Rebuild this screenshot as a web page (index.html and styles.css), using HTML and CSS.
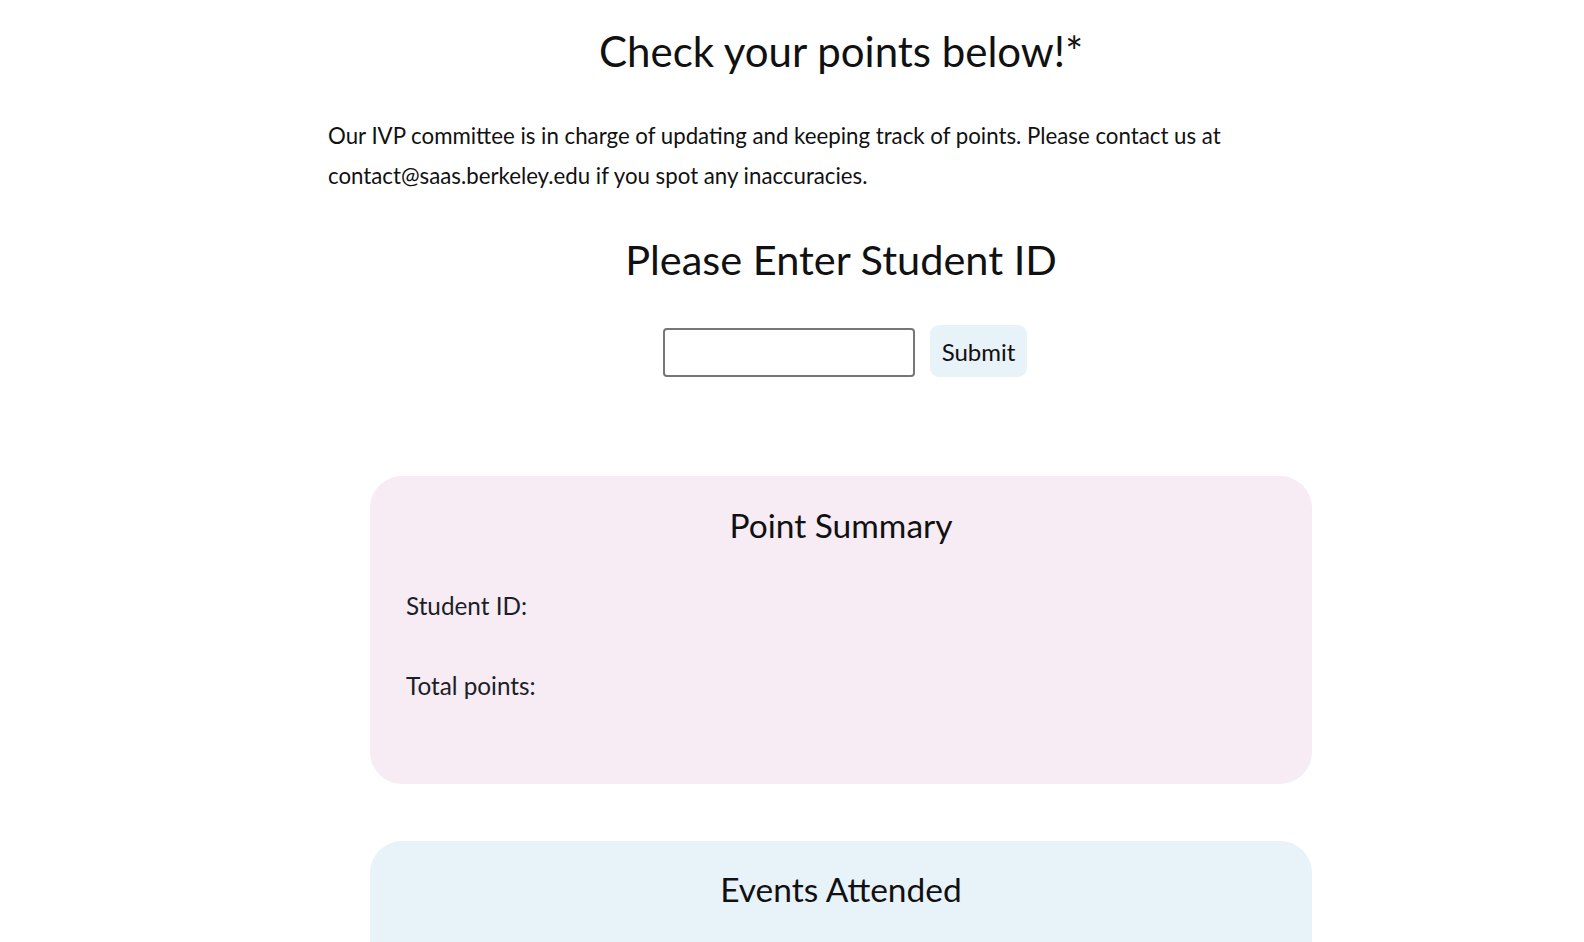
FILE: index.html
```html
<!DOCTYPE html>
<html lang="en">
<head>
<meta charset="utf-8">
<title>Check your points</title>
<link rel="stylesheet" href="styles.css">
</head>
<body>
<div class="page">
  <main class="content">
    <h1 class="title">Check your points below!*</h1>
    <p class="intro">Our IVP committee is in charge of updating and keeping track of points. Please contact us at contact@saas.berkeley.edu if you spot any inaccuracies.</p>
    <h2 class="prompt">Please Enter Student ID</h2>
    <form class="lookup">
      <input class="id-input" type="text" aria-label="Student ID">
      <button class="submit" type="button">Submit</button>
    </form>
    <section class="card card-pink">
      <h3 class="card-title">Point Summary</h3>
      <p class="field field-first">Student ID:</p>
      <p class="field field-second">Total points:</p>
    </section>
    <section class="card card-blue">
      <h3 class="card-title">Events Attended</h3>
    </section>
  </main>
</div>
</body>
</html>
```

FILE: styles.css
```css
html, body {
  margin: 0;
  padding: 0;
  background: #ffffff;
}
body {
  font-family: "Lato", "Open Sans", sans-serif;
  color: #111111;
}
.page {
  display: flex;
  justify-content: center;
  padding-left: 98px;
}
.content {
  width: 1026px;
  display: flex;
  flex-direction: column;
}
.title {
  margin: 26px 0 0;
  font-size: 42px;
  line-height: 50px;
  font-weight: 400;
  text-align: center;
}
.intro {
  margin: 40px 0 0;
  font-size: 22.25px;
  line-height: 40px;
}
.prompt {
  margin: 38px 0 0;
  font-size: 41.5px;
  line-height: 50px;
  font-weight: 400;
  text-align: center;
}
.lookup {
  margin: 41px 0 0;
  display: flex;
  justify-content: center;
  align-items: center;
  gap: 15px;
  padding-left: 8px;
}
.id-input {
  width: 252px;
  height: 49px;
  box-sizing: border-box;
  border: 2px solid #767676;
  border-radius: 4px;
  font-size: 22px;
  padding: 0 8px;
  margin-top: 3px;
}
.submit {
  width: 97px;
  height: 52px;
  border: none;
  border-radius: 9px;
  background: #e8f2f9;
  font-family: inherit;
  font-size: 24px;
  color: #111111;
  padding: 0;
}
.card {
  margin: 0 42px 0 42px;
  border-radius: 32px;
  padding: 29px 36px 83px;
}
.card-pink {
  margin-top: 99px;
  background: #f7ebf4;
}
.card-blue {
  margin-top: 57px;
  padding-top: 28px;
  background: #e8f2f9;
  min-height: 120px;
}
.card-title {
  margin: 0;
  font-size: 33.5px;
  line-height: 40px;
  font-weight: 400;
  text-align: center;
}
.field {
  margin: 0;
  font-size: 24.3px;
  line-height: 30px;
  color: #1a1f28;
}
.field-first {
  margin-top: 46px;
}
.field-second {
  margin-top: 50px;
}
```
